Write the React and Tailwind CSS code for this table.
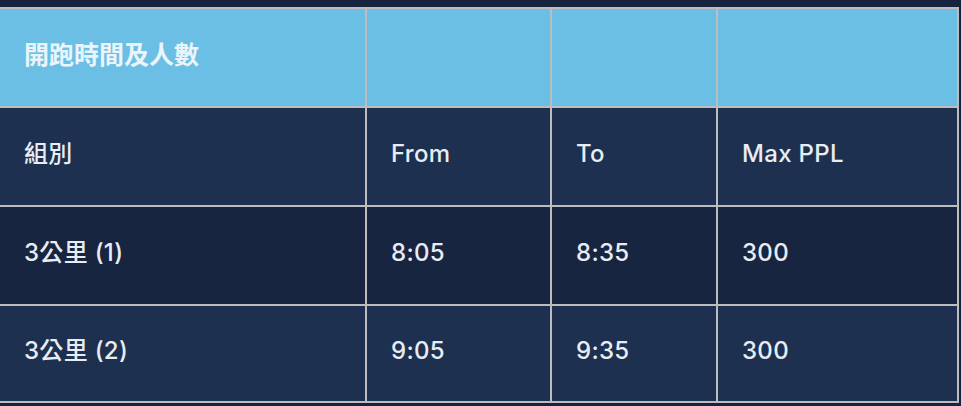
export default function App() {
  const font = { fontFamily: 'Inter, "Noto Sans CJK TC", sans-serif' };
  const rows = [
    { bg: "bg-[#1d3050]", cells: ["組別", "From", "To", "Max PPL"] },
    { bg: "bg-[#182541]", cells: ["3公里 (1)", "8:05", "8:35", "300"] },
    { bg: "bg-[#1d3050]", cells: ["3公里 (2)", "9:05", "9:35", "300"] },
  ];
  const widths = ["w-[367px]", "w-[185px]", "w-[166px]", "w-[241px]"];
  return (
    <div className="w-[961px] h-[406px] bg-[#172440] pt-[7px] overflow-hidden" style={font}>
      <div className="w-[959px] border-t-2 border-[#bdbdbd]">
        <div className="flex bg-[#6cbfe4]">
          {widths.map((w, i) => (
            <div
              key={i}
              className={`${w} h-[99px] border-r-2 border-b-2 border-[#bdbdbd] flex items-center pl-6 pb-1 text-[25px] font-bold text-[#eaf5fb]`}
            >
              {i === 0 ? "開跑時間及人數" : ""}
            </div>
          ))}
        </div>
        {rows.map((r, ri) => (
          <div key={ri} className={`flex ${r.bg}`}>
            {widths.map((w, i) => (
              <div
                key={i}
                className={`${w} ${ri === 2 ? "h-[97px]" : "h-[99px]"} border-r-2 border-b-2 border-[#bdbdbd] flex items-center pl-6 pb-[5px] text-[24px] font-medium tracking-[0.3px] text-[#e8edf4]`}
              >
                {r.cells[i]}
              </div>
            ))}
          </div>
        ))}
      </div>
    </div>
  );
}
